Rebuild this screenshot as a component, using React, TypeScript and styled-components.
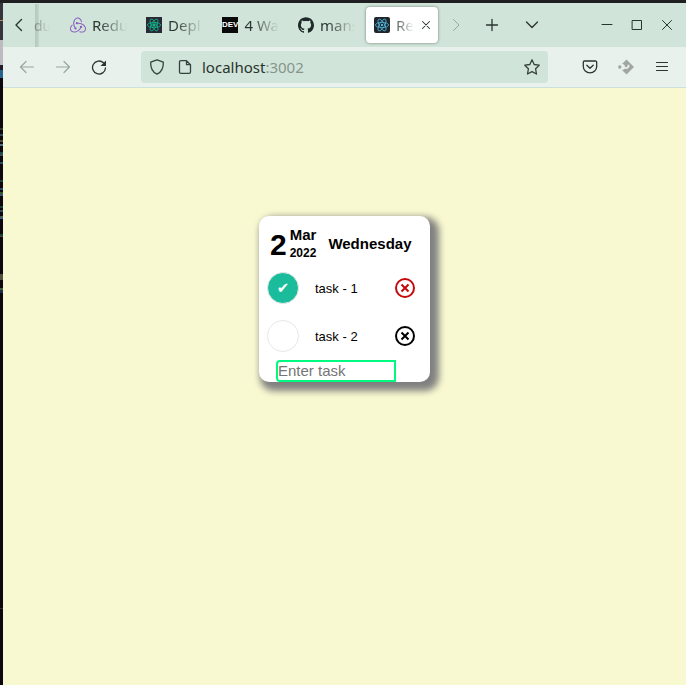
import React, { useState } from "react";
import styled, { createGlobalStyle } from "styled-components";
import { SiGithub, SiRedux } from "react-icons/si";

const GlobalStyle = createGlobalStyle`
  * { box-sizing: border-box; }
  html, body, #root { height: 100%; }
  body { margin: 0; background: #f9f9d1; overflow: hidden; }
  button, input { font: inherit; margin: 0; padding: 0; }
`;

const Desktop = styled.div`
  display: flex;
  min-height: 100%;
  border-top: 3px solid #1f1e20;
`;

const Backdrop = styled.div`
  flex: 0 0 3px;
  background: linear-gradient(
    to bottom,
    #37353c 0 17px, #b98a5c 17px 18px, #37353c 18px 37px, #bdbbbf 37px 62px,
    #221d28 62px 67px, #27638d 67px 75px, #0d080f 75px 125px, #34342f 125px 127px,
    #0d080f 127px 131px, #32485c 131px 133px, #0d080f 133px 137px, #4d4b3a 137px 139px,
    #0d080f 139px 141px, #4f6f83 141px 143px, #0d080f 143px 149px, #1c4846 149px 151px,
    #394a60 151px 153px, #0d080f 153px 159px, #224c68 159px 161px, #0d080f 161px 177px,
    #184238 177px 179px, #0d080f 179px 185px, #234b6c 185px 187px, #0d080f 187px 189px,
    #36552f 189px 191px, #3a5370 191px 193px, #0d080f 193px 203px, #174038 203px 205px,
    #0d080f 205px 207px, #32485c 207px 209px, #0d080f 209px 213px, #45603f 213px 214px,
    #405e80 214px 216px, #0d080f 216px 231px, #174038 231px 233px, #4d4b3a 233px 234px,
    #0d080f 234px 271px, #55513d 271px 277px, #0d080f 277px 285px, #45603f 285px 287px,
    #202c46 287px 290px, #0d080f 290px 605px, #343036 605px 606px, #0d080f 606px
  );
`;

const Browser = styled.div`
  flex: 1;
  min-width: 0;
  display: flex;
  flex-direction: column;
  font-family: "Noto Sans", "Open Sans", sans-serif;
  font-size: 14px;
  color: #2e3d36;
`;

const TabBar = styled.header`
  display: flex;
  align-items: center;
  height: 44px;
  background: #d1e4d9;
`;

const IconButton = styled.button<{ $width?: number; $dim?: boolean }>`
  flex: 0 0 auto;
  display: flex;
  align-items: center;
  justify-content: center;
  width: ${(p) => p.$width ?? 36}px;
  height: 32px;
  border: 0;
  background: none;
  color: ${(p) => (p.$dim ? "#9aa8a0" : "#29352f")};
`;

const Tabs = styled.nav`
  display: flex;
  align-items: center;
  height: 44px;
`;

const ClippedTab = styled.button`
  width: 28px;
  height: 43px;
  border: 0;
  text-align: left;
  color: #7c8a82;
  background: linear-gradient(to right, #d1e4d9 1px, #b6c8be 1px, #c3d6cb 5px, #d1e4d9 5px);
`;

const ClippedTitle = styled.span`
  display: block;
  mask-image: linear-gradient(to right, #000, transparent 16px);
`;

const Tab = styled.div<{ $active?: boolean }>`
  display: flex;
  align-items: center;
  width: 72px;
  height: 36px;
  margin-right: 4px;
  padding-left: 8px;
  border-radius: 4px;
  background: ${(p) => (p.$active ? "#fff" : "transparent")};
  box-shadow: ${(p) => (p.$active ? "0 0 3px #6f7d75" : "none")};
`;

const TabLink = styled.button<{ $active?: boolean }>`
  display: flex;
  align-items: center;
  gap: 6px;
  flex: 1;
  min-width: 0;
  border: 0;
  background: none;
  font-size: 15px;
  color: ${(p) => (p.$active ? "#6f7773" : "#2b3831")};
  svg { flex: 0 0 auto; }
`;

const TabTitle = styled.span<{ $width: number }>`
  width: ${(p) => p.$width}px;
  white-space: nowrap;
  text-align: left;
  mask-image: linear-gradient(to right, #000 20%, transparent);
`;

const DevBadge = styled.span`
  flex: 0 0 16px;
  height: 16px;
  background: #0a0a0a;
  color: #fff;
  font: bold 8px/16px "Liberation Sans Narrow", "Liberation Sans", sans-serif;
  text-align: center;
`;

const WindowControls = styled.div`
  display: flex;
  margin-left: auto;
  padding-right: 4px;
`;

const Toolbar = styled.div`
  display: flex;
  align-items: center;
  height: 41px;
  padding: 0 6px;
  background: #e8f1ec;
  border-bottom: 1px solid #cbdfdc;
`;

const AddressBar = styled.div`
  flex: 1;
  min-width: 0;
  display: flex;
  align-items: center;
  height: 32px;
  margin: 0 24px;
  padding: 0 8px;
  border-radius: 4px;
  background: #d1e4d9;
  color: #35433c;
  svg { flex: 0 0 auto; }
`;

const Address = styled.span`
  flex: 1;
  margin-left: 9px;
  font-size: 15px;
  color: #27332d;
`;

const Port = styled.span`
  color: #87958d;
`;

const SiteIcons = styled.span`
  display: flex;
  gap: 12px;
`;

const Page = styled.main`
  flex: 1;
  padding-top: 128px;
  background: #f9f9d1;
  font-family: "Liberation Sans", Arial, sans-serif;
  color: #000;
`;

const Card = styled.section`
  width: 171px;
  margin: 0 auto;
  border-radius: 10px;
  background: #fff;
  box-shadow: 5px 5px 7px 4px #808080;
`;

const DateHeader = styled.header`
  display: flex;
  align-items: center;
  height: 56px;
  padding: 0 11px;
  font-weight: bold;
`;

const Day = styled.span`
  padding-top: 2px;
  font-size: 30px;
  line-height: 34px;
`;

const MonthYear = styled.div`
  display: flex;
  flex-direction: column;
  margin: 0 12px 0 3px;
`;

const Month = styled.span`
  font-size: 15px;
  line-height: 18px;
`;

const Year = styled.span`
  font-size: 12px;
  line-height: 18px;
`;

const Weekday = styled.h1`
  margin: 0;
  font-size: 15px;
  line-height: 18px;
`;

const TaskList = styled.ul`
  margin: 0;
  padding: 0;
  list-style: none;
`;

const TaskRow = styled.li`
  display: flex;
  align-items: center;
  height: 32px;
  margin-bottom: 16px;
  padding: 0 15px 0 8px;
  &:last-child { margin-bottom: 8px; }
`;

const TaskCheck = styled.input`
  appearance: none;
  display: flex;
  align-items: center;
  justify-content: center;
  width: 32px;
  height: 32px;
  border: 1px solid #e8e8e8;
  border-radius: 50%;
  background: #fff;
  &:checked { background: #1abc9c; }
  &:checked::after {
    content: "✔";
    color: #fff;
    font: 15px/18px "DejaVu Sans", sans-serif;
  }
`;

const TaskName = styled.label`
  flex: 1;
  margin-left: 16px;
  font-size: 13px;
`;

const RemoveButton = styled.button<{ $done: boolean }>`
  display: flex;
  border: 0;
  background: none;
  color: ${(p) => (p.$done ? "#c40a0a" : "#000")};
`;

const TaskInput = styled.input`
  display: block;
  width: 120px;
  height: 22px;
  margin-left: 17px;
  padding-bottom: 2px;
  border: 2px solid #00fa80;
  border-radius: 4px 0 0 4px;
  outline: 0;
  font-size: 15px;
  &::placeholder { color: #757575; }
`;

type GlyphProps = { d: string; size?: number; width?: number };

const Glyph = ({ d, size = 16, width = 1 }: GlyphProps) => (
  <svg width={size} height={size} viewBox="0 0 16 16" fill="none" stroke="currentColor" strokeWidth={width} strokeLinecap="round" strokeLinejoin="round" aria-hidden="true">
    <path d={d} />
  </svg>
);

const ReactMark = ({ color, background, hex }: { color: string; background: string; hex?: boolean }) => (
  <svg width="16" height="16" viewBox="0 0 16 16" aria-hidden="true">
    <rect width="16" height="16" rx={hex ? 0 : 2} fill={background} />
    <g fill="none" stroke={color} strokeWidth="0.8">
      <ellipse cx="8" cy="8" rx="6.6" ry="2.6" />
      <ellipse cx="8" cy="8" rx="6.6" ry="2.6" transform="rotate(60 8 8)" />
      <ellipse cx="8" cy="8" rx="6.6" ry="2.6" transform="rotate(120 8 8)" />
    </g>
    {hex ? <rect x="6.5" y="6.5" width="3" height="3" fill={color} /> : <circle cx="8" cy="8" r="1.2" fill={color} />}
  </svg>
);

const ExtensionMark = () => (
  <svg width="16" height="16" viewBox="0 0 16 16" aria-hidden="true">
    <path d="M8.500 .5 16 8l-7.500 7.500L3.500 10.500V5.500z" fill="#a1a5a3" />
    <circle cx="4" cy="8" r="3" fill="#e8f1ec" />
    <circle cx="1.800" cy="8" r="1.700" fill="#a1a5a3" />
    <path d="M6.500 8.500q2.500 1.500 4-1V5.800" fill="none" stroke="#e8f1ec" strokeWidth="1.800" />
  </svg>
);

const tabs = [
  { title: "Redu", icon: <SiRedux size={16} color="#8a5bc0" /> },
  { title: "Depl", icon: <ReactMark color="#12b58a" background="#282a35" hex /> },
  { title: "4 Wa", icon: <DevBadge>DEV</DevBadge> },
  { title: "mans", icon: <SiGithub size={16} color="#202a2a" /> },
];

const initialTasks = [
  { id: 1, name: "task - 1", done: true },
  { id: 2, name: "task - 2", done: false },
];

export default function App() {
  const [tasks, setTasks] = useState(initialTasks);
  const [draft, setDraft] = useState("");

  const toggle = (id: number) =>
    setTasks((all) => all.map((t) => (t.id === id ? { ...t, done: !t.done } : t)));
  const remove = (id: number) => setTasks((all) => all.filter((t) => t.id !== id));
  const add = (event: React.KeyboardEvent) => {
    if (event.key !== "Enter" || !draft.trim()) return;
    setTasks((all) => [...all, { id: Date.now(), name: draft, done: false }]);
    setDraft("");
  };

  return (
    <>
      <GlobalStyle />
      <Desktop>
        <Backdrop />
        <Browser>
          <TabBar>
            <IconButton $width={31} aria-label="Scroll tabs left"><Glyph d="M10.500 2.500 5 8l5.500 5.500" width={1.4} /></IconButton>
            <Tabs>
              <ClippedTab><ClippedTitle>du</ClippedTitle></ClippedTab>
              {tabs.map((tab) => (
                <Tab key={tab.title}>
                  <TabLink>{tab.icon}<TabTitle $width={35}>{tab.title}</TabTitle></TabLink>
                </Tab>
              ))}
              <Tab $active>
                <TabLink $active>
                  <ReactMark color="#4fb9dc" background="#20262c" />
                  <TabTitle $width={21}>Re</TabTitle>
                </TabLink>
                <IconButton $width={24} aria-label="Close tab"><Glyph d="m4 4 8 8M12 4l-8 8" size={14} width={1.2} /></IconButton>
              </Tab>
            </Tabs>
            <IconButton $width={28} $dim aria-label="Scroll tabs right"><Glyph d="m5.500 2.500 5.500 5.500-5.500 5.500" /></IconButton>
            <IconButton $width={43} aria-label="New tab"><Glyph d="M8 2.500v11M2.500 8h11" width={1.3} /></IconButton>
            <IconButton $width={38} aria-label="List all tabs"><Glyph d="m2.500 5 5.500 5.500L13.500 5" width={1.3} /></IconButton>
            <WindowControls>
              <IconButton $width={30} aria-label="Minimize"><Glyph d="M3 7.500h10" /></IconButton>
              <IconButton $width={30} aria-label="Maximize"><Glyph d="M3.500 3.500h9v9h-9z" /></IconButton>
              <IconButton $width={30} aria-label="Close window"><Glyph d="m3.500 3.500 9 9M12.500 3.500l-9 9" /></IconButton>
            </WindowControls>
          </TabBar>
          <Toolbar>
            <IconButton $dim aria-label="Back"><Glyph d="M14.500 8h-13M7 2.500 1.500 8 7 13.500" width={1.2} /></IconButton>
            <IconButton $dim aria-label="Forward"><Glyph d="M1.500 8h13M9 2.500 14.500 8 9 13.500" width={1.2} /></IconButton>
            <IconButton aria-label="Reload">
              <svg width="16" height="16" viewBox="0 0 16 16" fill="none" stroke="currentColor" strokeWidth="1.3" aria-hidden="true">
                <path d="M12.500 3.800A6.500 6.500 0 1 0 14.500 9" strokeLinecap="round" />
                <path d="M15 1.500v5.500H9.500z" fill="currentColor" stroke="none" />
              </svg>
            </IconButton>
            <AddressBar>
              <SiteIcons>
                <Glyph d="M8 .8 14.300 3.200C14.600 9 12.500 13 8 15.200 3.500 13 1.400 9 1.700 3.200z" width={1.3} />
                <Glyph d="M9.500 1.700H3.800A1.300 1.300 0 0 0 2.500 3v10a1.300 1.300 0 0 0 1.300 1.300h8.400a1.300 1.300 0 0 0 1.300-1.300V5.700zv4h4" width={1.3} />
              </SiteIcons>
              <Address>localhost<Port>:3002</Port></Address>
              <Glyph d="m8 .8 2.200 4.700 5 .7-3.600 3.600.9 5.200L8 12.600 3.500 15l.9-5.200L.8 6.200l5-.7z" width={1.3} />
            </AddressBar>
            <IconButton aria-label="Save to Pocket">
              <Glyph d="M2.500 2h11a1.200 1.200 0 0 1 1.200 1.200V7.500a6.700 6.400 0 0 1-13.400 0V3.200A1.200 1.200 0 0 1 2.500 2zM4.800 6.200 8 9.200l3.200-3" width={1.3} />
            </IconButton>
            <IconButton aria-label="Extension"><ExtensionMark /></IconButton>
            <IconButton aria-label="Open menu"><Glyph d="M2.500 3.500h11M2.500 7.500h11M2.500 11.500h11" width={1.1} /></IconButton>
          </Toolbar>
          <Page>
            <Card>
              <DateHeader>
                <Day>2</Day>
                <MonthYear><Month>Mar</Month><Year>2022</Year></MonthYear>
                <Weekday>Wednesday</Weekday>
              </DateHeader>
              <TaskList>
                {tasks.map((task) => (
                  <TaskRow key={task.id}>
                    <TaskCheck id={`task-${task.id}`} type="checkbox" checked={task.done} onChange={() => toggle(task.id)} />
                    <TaskName htmlFor={`task-${task.id}`}>{task.name}</TaskName>
                    <RemoveButton $done={task.done} onClick={() => remove(task.id)} aria-label={`Remove ${task.name}`}>
                      <svg width="20" height="20" viewBox="0 0 20 20" fill="none" stroke="currentColor" strokeWidth="2" aria-hidden="true">
                        <circle cx="10" cy="10" r="9" />
                        <path d="m6.500 6.500 7 7M13.500 6.500l-7 7" />
                      </svg>
                    </RemoveButton>
                  </TaskRow>
                ))}
              </TaskList>
              <TaskInput
                aria-label="Enter task"
                placeholder="Enter task"
                value={draft}
                onChange={(event) => setDraft(event.target.value)}
                onKeyDown={add}
              />
            </Card>
          </Page>
        </Browser>
      </Desktop>
    </>
  );
}
